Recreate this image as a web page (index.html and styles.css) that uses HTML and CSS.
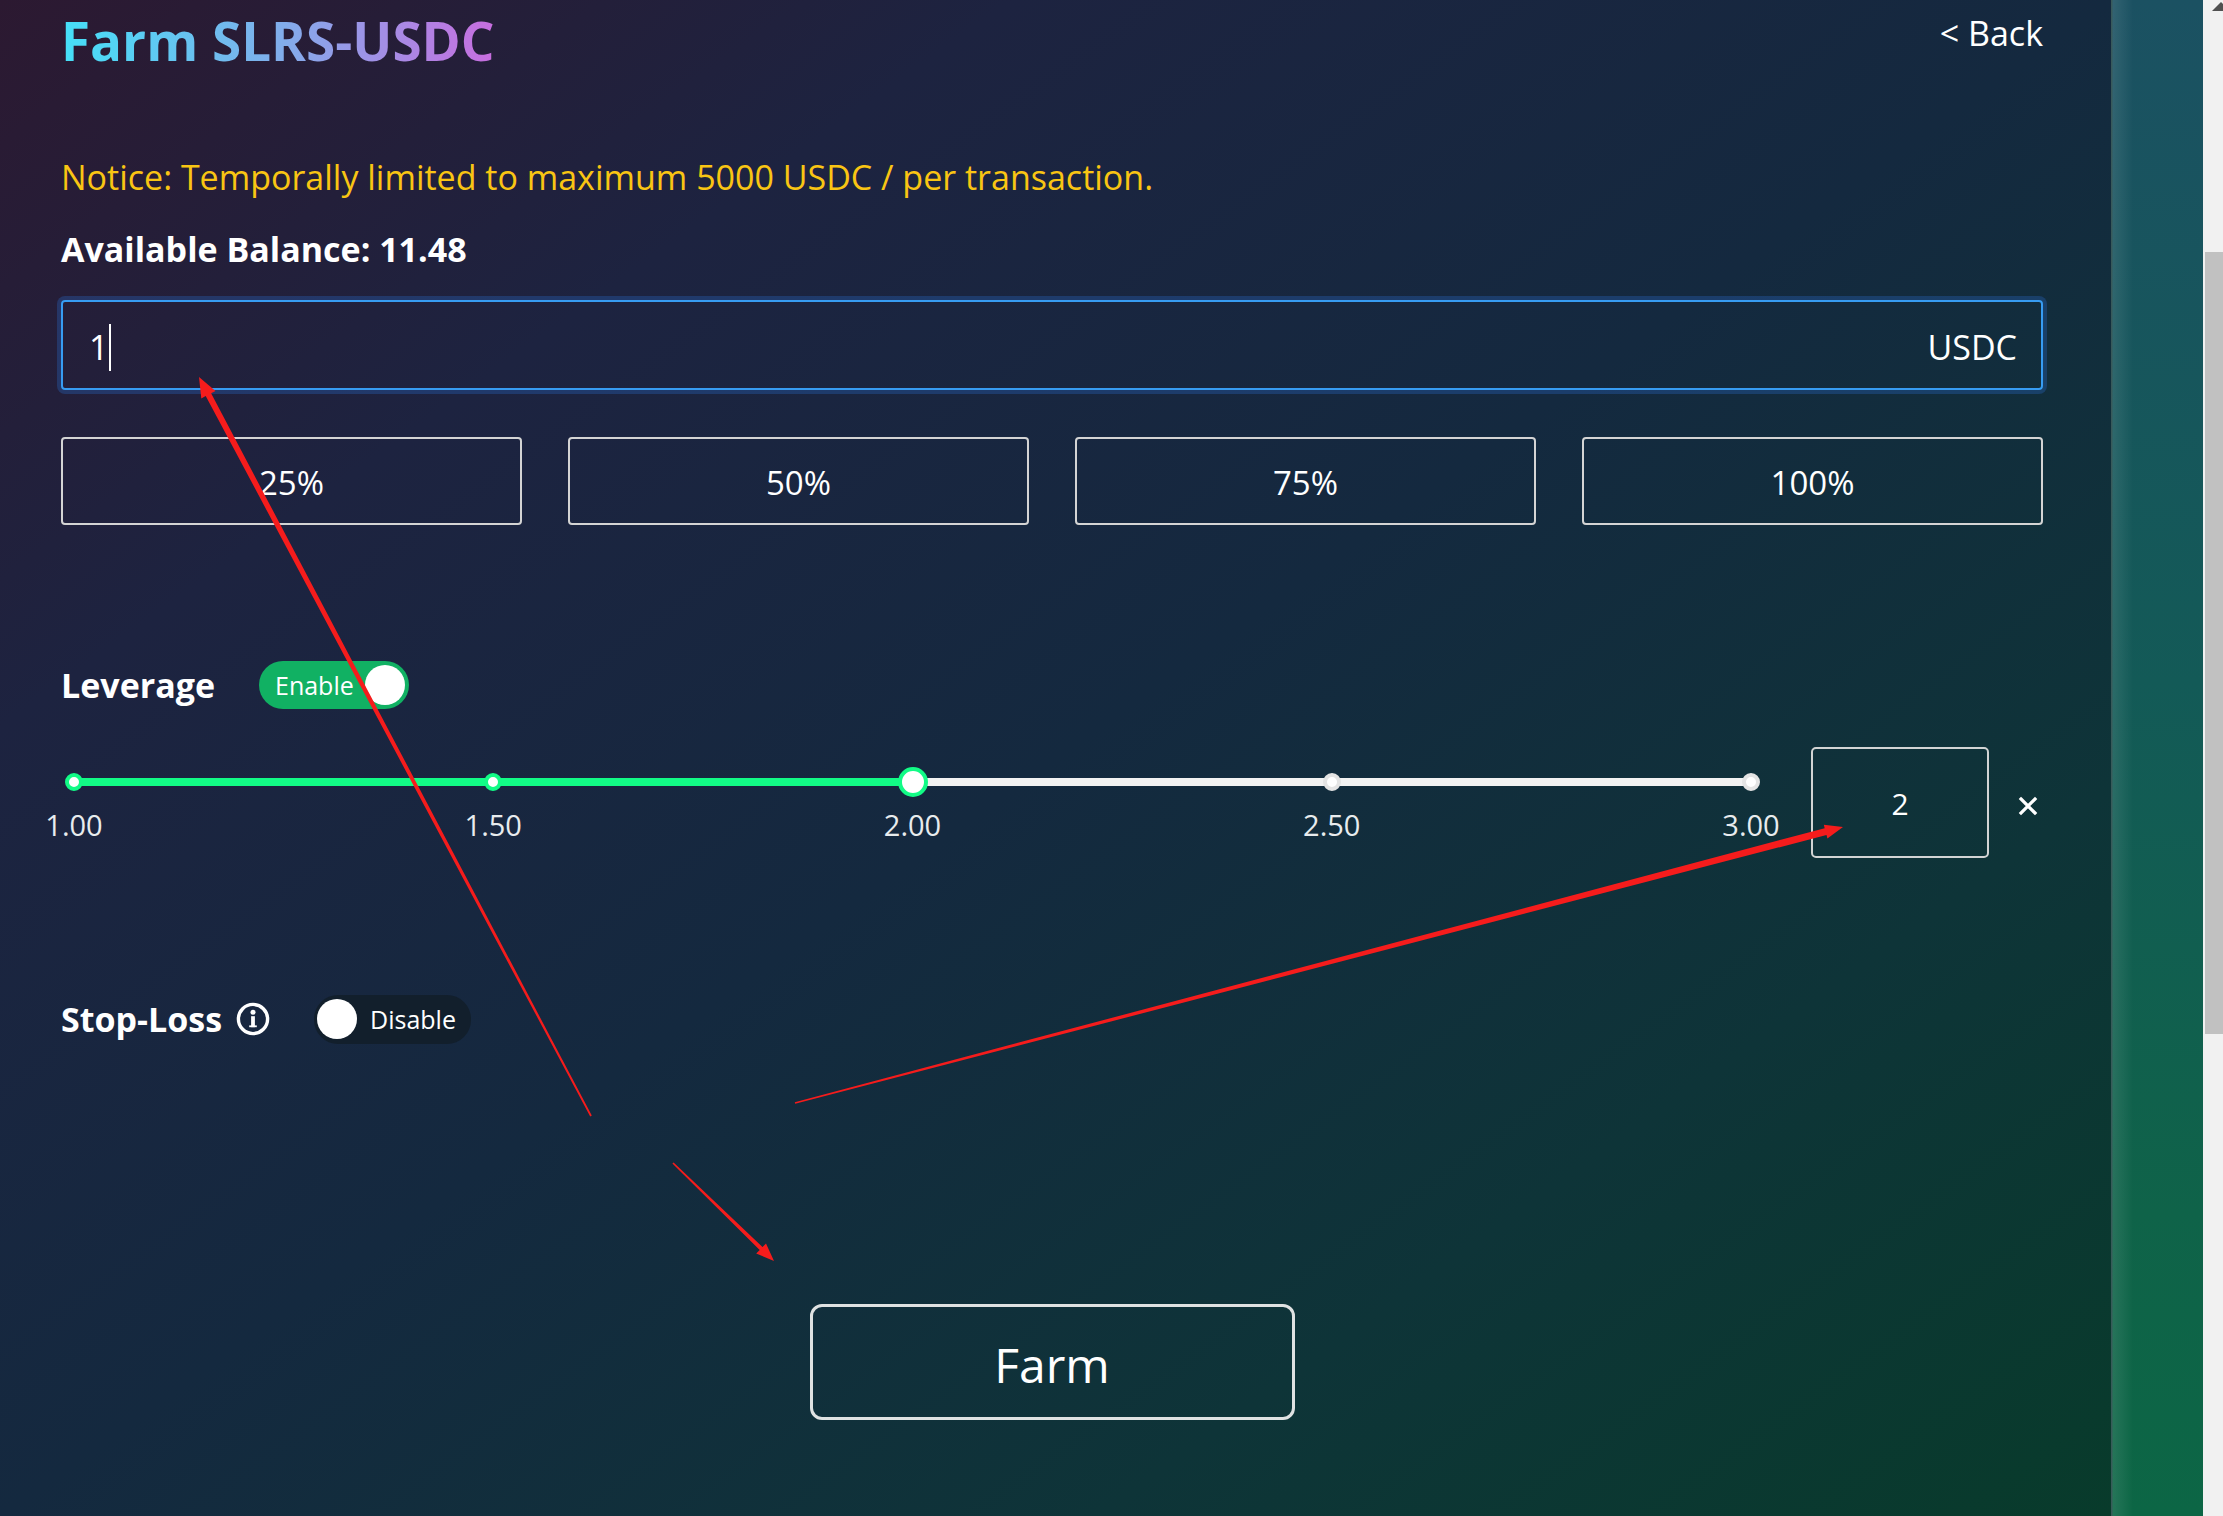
FILE: index.html
```html
<!DOCTYPE html>
<html lang="en">
<head>
<meta charset="utf-8">
<title>Farm SLRS-USDC</title>
<link rel="stylesheet" href="styles.css">
</head>
<body>
<div class="page">
  <main class="main">
    <header class="header">
      <h1 class="title">Farm SLRS-USDC</h1>
      <div class="back">&lt; Back</div>
    </header>
    <p class="notice">Notice: Temporally limited to maximum 5000 USDC / per transaction.</p>
    <div class="balance">Available Balance: 11.48</div>
    <div class="amount">
      <span class="amount-value">1</span><span class="caret"></span>
      <span class="amount-unit">USDC</span>
    </div>
    <div class="percents">
      <div class="pct">25%</div>
      <div class="pct">50%</div>
      <div class="pct">75%</div>
      <div class="pct">100%</div>
    </div>
    <div class="option-row">
      <div class="label">Leverage</div>
      <div class="toggle on"><span class="toggle-text">Enable</span><span class="knob"></span></div>
    </div>
    <div class="slider-row">
      <div class="slider">
        <div class="marks">
          <div class="slot"><span class="dot"></span></div>
          <div class="slot"><span class="dot"></span></div>
          <div class="slot"><span class="handle"></span></div>
          <div class="slot"><span class="dot off"></span></div>
          <div class="slot"><span class="dot off"></span></div>
        </div>
        <div class="ticks">
          <span class="tick">1.00</span>
          <span class="tick">1.50</span>
          <span class="tick">2.00</span>
          <span class="tick">2.50</span>
          <span class="tick">3.00</span>
        </div>
      </div>
      <div class="lev-box">2</div>
      <svg class="close" width="20" height="20" viewBox="0 0 20 20"><path d="M3 3L17 17M17 3L3 17" stroke="#fff" stroke-width="3.2" stroke-linecap="square"/></svg>
    </div>
    <div class="option-row stop-row">
      <div class="label">Stop-Loss</div>
      <svg class="info" width="34" height="34" viewBox="0 0 34 34"><circle cx="17" cy="17" r="14.6" fill="none" stroke="#fff" stroke-width="3.4"/><circle cx="17" cy="10.2" r="2.5" fill="#fff"/><rect x="15.1" y="14.2" width="3.8" height="11" fill="#fff"/><rect x="13.2" y="23.4" width="7.6" height="1.8" fill="#fff"/></svg>
      <div class="toggle off"><span class="knob"></span><span class="toggle-text">Disable</span></div>
    </div>
    <div class="farm-btn">Farm</div>
  </main>
  <div class="strip"></div>
  <div class="scrollbar"><span class="scroll-arrow"></span><div class="thumb"></div></div>
  <svg class="annotations" width="2223" height="1516" viewBox="0 0 2223 1516">
    <polygon fill="#f51c1c" points="591.8,1115.6 211.1,393.3 215.5,390.9 199,377 201.3,398.4 205.7,396.1 590.2,1116.4"/>
    <polygon fill="#f51c1c" points="794.8,1102.2 1824.7,828.2 1823.8,824.8 1843,827 1827.4,838.4 1826.5,835.0 795.2,1103.8"/>
    <polygon fill="#f51c1c" points="673.6,1162.4 762.5,1247.1 766.0,1243.5 774,1261 756.2,1253.5 759.7,1249.9 672.4,1163.6"/>
  </svg>
</div>
</body>
</html>
```
FILE: styles.css
```css
* { box-sizing: border-box; }
html, body { margin: 0; padding: 0; }
body {
  width: 2223px;
  height: 1516px;
  overflow: hidden;
  font-family: "Open Sans", "Noto Sans", sans-serif;
  color: #fff;
  background: #13293f;
}
.page {
  display: flex;
  height: 1516px;
  position: relative;
}
.main {
  width: 2111px;
  flex: none;
  padding: 9px 68px 0 61px;
  background: linear-gradient(to bottom right, #2c1931 0%, #1d2340 24%, #14293f 50%, #0e3438 76%, #083b2b 100%);
}
.strip {
  width: 92px;
  flex: none;
  background:
    linear-gradient(to right, rgba(60,90,90,0.9) 0, rgba(60,90,90,0.9) 1px, rgba(255,255,255,0.10) 2px, rgba(255,255,255,0) 22px),
    linear-gradient(to bottom, #1b5162 0%, #135a57 45%, #0f6349 80%, #0c6645 100%);
}
.scrollbar {
  width: 20px;
  flex: none;
  background: #f1f1f1;
  position: relative;
  padding: 252px 0 0 2px;
}
.thumb {
  height: 782px;
  background: #c1c1c1;
}
.scroll-arrow {
  position: absolute;
  top: 2px;
  left: 9px;
  width: 0;
  height: 0;
  border-left: 9px solid transparent;
  border-right: 9px solid transparent;
  border-bottom: 9px solid #505050;
}
.annotations {
  position: absolute;
  top: 0;
  left: 0;
  pointer-events: none;
}

.header {
  display: flex;
  justify-content: space-between;
  align-items: flex-start;
}
.title {
  margin: 0;
  font-size: 53px;
  line-height: 64px;
  font-weight: 700;
  background: linear-gradient(90deg, #45e0f8 0%, #80aeeb 50%, #c86ddf 100%);
  -webkit-background-clip: text;
  background-clip: text;
  color: transparent;
}
.back {
  margin-top: 2px;
  font-size: 34px;
  line-height: 44px;
}
.notice {
  margin: 81px 0 0;
  font-size: 34px;
  line-height: 46px;
  color: #f9c513;
}
.balance {
  margin-top: 26px;
  font-size: 34px;
  line-height: 46px;
  font-weight: 700;
}
.amount {
  margin-top: 28px;
  height: 90px;
  border: 2px solid #379cf2;
  border-radius: 4px;
  box-shadow: 0 0 0 4px rgba(40, 100, 190, 0.35);
  display: flex;
  align-items: center;
  padding: 4px 24px 0 26px;
  font-size: 34px;
  line-height: 44px;
}
.caret {
  width: 1.5px;
  height: 47px;
  background: #fff;
  margin-left: 1px;
}
.amount-unit {
  margin-left: auto;
}
.percents {
  margin-top: 47px;
  display: grid;
  grid-template-columns: repeat(4, 1fr);
  gap: 46px;
}
.pct {
  height: 88px;
  border: 2px solid #d4d4d4;
  border-radius: 4px;
  display: flex;
  align-items: center;
  justify-content: center;
  font-size: 33px;
  line-height: 44px;
  padding-top: 4px;
}
.option-row {
  margin-top: 136px;
  height: 48px;
  display: flex;
  align-items: center;
}
.label {
  font-size: 34px;
  line-height: 44px;
  font-weight: 700;
}
.toggle {
  margin-left: 44px;
  height: 48px;
  border-radius: 24px;
  display: flex;
  align-items: center;
  font-size: 25px;
  line-height: 32px;
}
.toggle.on {
  width: 150px;
  background: #11b163;
  padding: 0 4px 0 16px;
  justify-content: space-between;
}
.toggle.off {
  margin-left: 44px;
  width: 157px;
  height: 49px;
  background: #121f2c;
  padding: 0 4px 0 3px;
}
.toggle.off .toggle-text {
  margin-left: 13px;
}
.knob {
  width: 40px;
  height: 40px;
  border-radius: 50%;
  background: #fff;
}
.slider-row {
  margin-top: 38px;
  display: flex;
  align-items: flex-start;
}
.slider {
  margin-left: -2px;
  margin-top: 20px;
  width: 1707px;
  flex: none;
}
.marks {
  position: relative;
  height: 30px;
  display: flex;
  justify-content: space-between;
}
.marks::before {
  content: "";
  position: absolute;
  left: 15px;
  right: 15px;
  top: 11px;
  height: 8px;
  border-radius: 4px;
  background: linear-gradient(to right, #12fb86 50%, #f2f2f2 50%);
}
.slot {
  position: relative;
  width: 30px;
  height: 30px;
  display: flex;
  align-items: center;
  justify-content: center;
}
.dot {
  width: 18px;
  height: 18px;
  border-radius: 50%;
  background: #fff;
  border: 4px solid #12fb86;
}
.dot.off {
  border-color: #e4e4e4;
}
.handle {
  width: 30px;
  height: 30px;
  border-radius: 50%;
  background: #fff;
  border: 4px solid #12fb86;
}
.ticks {
  margin: 10px -25px 0;
  display: flex;
  justify-content: space-between;
}
.tick {
  width: 80px;
  text-align: center;
  font-size: 29px;
  line-height: 36px;
  color: #e8ecee;
}
.lev-box {
  margin-left: 45px;
  width: 178px;
  height: 111px;
  border: 2px solid #d2d4d4;
  border-radius: 5px;
  display: flex;
  align-items: center;
  justify-content: center;
  font-size: 30px;
  line-height: 36px;
  padding-top: 3px;
}
.close {
  margin-left: 29px;
  align-self: center;
  margin-top: 6px;
}
.stop-row {
  margin-top: 137px;
}
.info {
  margin-left: 14px;
}
.farm-btn {
  margin: 261px auto 0;
  width: 485px;
  height: 116px;
  border: 3px solid #dfe2e2;
  border-radius: 12px;
  display: flex;
  align-items: center;
  justify-content: center;
  font-size: 48px;
  line-height: 60px;
  padding-top: 6px;
}
```
